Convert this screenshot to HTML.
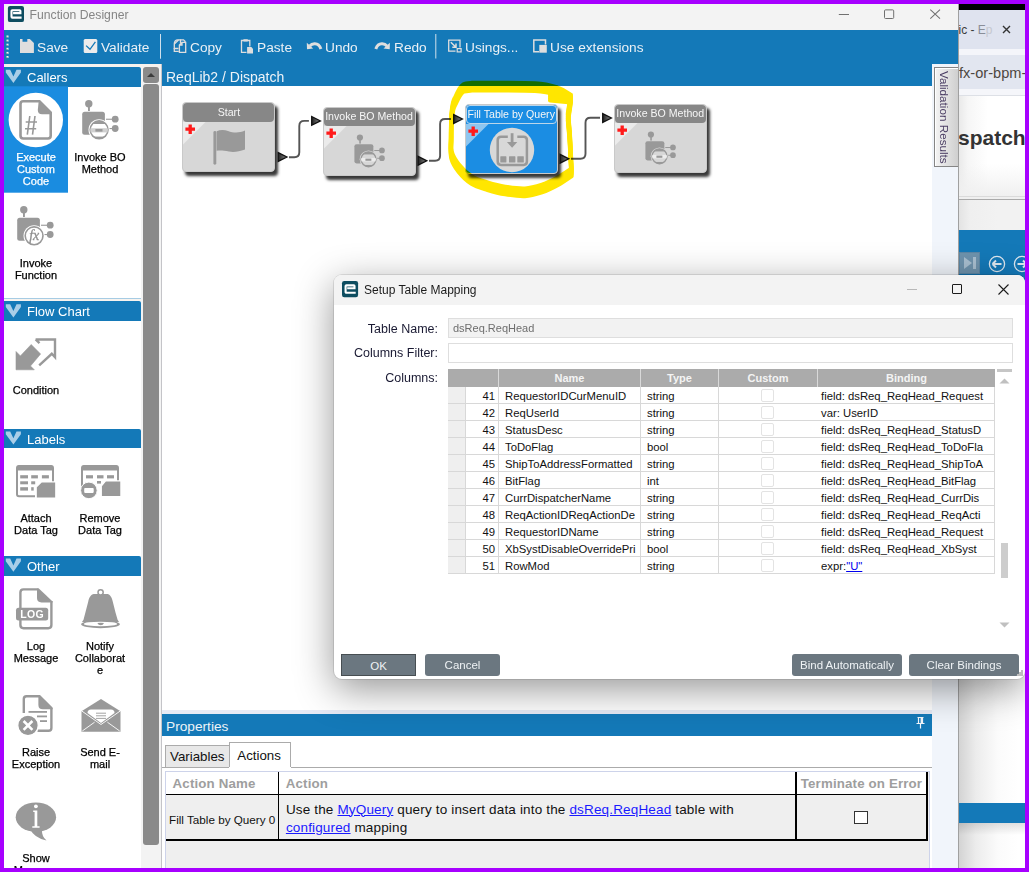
<!DOCTYPE html>
<html><head><meta charset="utf-8">
<style>
*{margin:0;padding:0;box-sizing:border-box}
html,body{width:1029px;height:872px;overflow:hidden;background:#a700ff;font-family:"Liberation Sans",sans-serif;position:relative}
.a{position:absolute}
.t{position:absolute;white-space:nowrap}
svg{position:absolute;overflow:visible}
.tbt{color:#eaf0f5;font-size:13.7px;top:40.2px;line-height:16px}
.sech{position:absolute;left:4px;width:137px;background:#1479b8;color:#fff;font-size:13px}
.sech .tx{position:absolute;left:23px;top:3px;line-height:15px}
.lbl{position:absolute;font-size:11px;color:#000;text-align:center;line-height:12.1px;width:64px;-webkit-text-stroke:0.25px currentColor}
.dl{font-size:12.5px;line-height:17px;color:#1a1a33;text-align:right}
.gh{top:2px;font-size:11px;line-height:14px;font-weight:bold;color:#f4f4f4;text-align:center}
.gr{position:absolute;left:0;width:547px;height:17px;border-bottom:1px solid #d8d8d8;background:#fff}
.gr .rh{position:absolute;left:0;top:0;width:18px;height:16px;background:#efefef;border-right:1px solid #d8d8d8}
.gr .c{position:absolute;top:0;height:16px;font-size:11.3px;line-height:18px;color:#111;white-space:nowrap;overflow:hidden;border-right:1px solid #d8d8d8}
.gr .num{left:18px;width:33px;text-align:right;padding-right:3px}
.gr .nm{left:51px;width:142px;padding-left:6px}
.gr .ty{left:193px;width:78px;padding-left:6px}
.gr .cb{position:absolute;left:313px;top:2px;width:13px;height:13px;border:1px solid #e3e3e3;border-radius:2px}
.gr .bd{left:270px;width:277px;padding-left:102px;border-left:none}
.gr .bd{left:370px;width:177px;padding-left:3px}
.btn{background:#6b7780;border-radius:3px;color:#eef2f4;font-size:11.5px;line-height:22px;text-align:center}
.node{border-radius:4px;box-shadow:3px 4px 3px rgba(0,0,0,0.78)}
.ntt{top:2.5px;font-size:10.6px;line-height:13px;color:#f6f6f6;text-align:center}
</style></head><body>
<!-- main window -->
<div class="a" style="left:4px;top:4px;width:954px;height:864px;background:#fff"></div>
<!-- title bar -->
<div class="a" style="left:4px;top:4px;width:954px;height:26px;background:#f3f3f3"></div>
<div class="t" style="left:29.6px;top:8px;font-size:12.2px;line-height:14px;color:#858585">Function Designer</div>
<!-- toolbar -->
<div class="a" style="left:4px;top:30px;width:954px;height:34px;background:#1479b8"></div>
<div class="t tbt" style="left:37px">Save</div>
<div class="t tbt" style="left:101px">Validate</div>
<div class="t tbt" style="left:190px">Copy</div>
<div class="t tbt" style="left:257px">Paste</div>
<div class="t tbt" style="left:325px">Undo</div>
<div class="t tbt" style="left:394px">Redo</div>
<div class="t tbt" style="left:465px">Usings...</div>
<div class="t tbt" style="left:550px">Use extensions</div>

<!-- title/toolbar icons -->
<svg style="left:0;top:0" width="958" height="64">
<rect x="7.9" y="5.9" width="16.1" height="16.2" rx="2.2" fill="#0e4d60"/>
<path d="M21.6 17.6H12.3Q11.5 17.6 11.5 16.8V11Q11.5 10.3 12.3 10.3H19.7Q20.4 10.3 20.4 11V13.1H13.1" fill="none" stroke="#fff" stroke-width="2.1"/>
<rect x="838.8" y="14" width="10.2" height="1" fill="#707070"/>
<rect x="884.5" y="9.9" width="9.2" height="8.6" rx="1" fill="none" stroke="#707070" stroke-width="1"/>
<path d="M930.3 9.6L940 18.6M940 9.6L930.3 18.6" stroke="#707070" stroke-width="1.05"/>
<g fill="#f4f4f4"><rect x="6.5" y="35.5" width="2" height="2"/><rect x="6.5" y="39.6" width="2" height="2"/><rect x="6.5" y="43.7" width="2" height="2"/><rect x="6.5" y="47.8" width="2" height="2"/><rect x="6.5" y="51.9" width="2" height="2"/><rect x="6.5" y="56" width="2" height="2"/></g>
<g fill="#6a6a6a"><rect x="6.5" y="36.7" width="1" height="1"/><rect x="6.5" y="40.8" width="1" height="1"/><rect x="6.5" y="44.9" width="1" height="1"/><rect x="6.5" y="49" width="1" height="1"/><rect x="6.5" y="53.1" width="1" height="1"/><rect x="6.5" y="57.2" width="1" height="1"/></g>
<path d="M20 39H22.5V41.7H27.3V39H29.8L33.9 43V52.9H20Z" fill="#dedede"/>
<rect x="83.7" y="39" width="13.6" height="13.9" rx="1.5" fill="#ececec"/>
<path d="M86.1 45.6L90 49.3L95.4 41.9" fill="none" stroke="#1479b8" stroke-width="1.3"/>
<rect x="160" y="34" width="1" height="24.7" fill="#cfe0ec"/>
<path d="M180.5 43.5V40.3Q180.5 39.8 181 39.8H183.5L185 41.3V43" fill="none" stroke="#dedede" stroke-width="1.3"/>
<path d="M178.5 48.5L174.3 48.5V44Q174.3 39.8 178 39.8H181" fill="none" stroke="#dedede" stroke-width="1.3"/>
<path d="M174.3 44L178.5 40" fill="none" stroke="#dedede" stroke-width="1.3"/>
<path d="M182 42.3H185.7V52.3H179.4V45L182 42.3ZM179.4 45H182V42.3" fill="none" stroke="#dedede" stroke-width="1.3"/>
<path d="M178.8 51.4H174.3V48" fill="none" stroke="#dedede" stroke-width="1.3"/>
<path d="M246.5 52.3H241.5V40.5H249.8V46.5" fill="none" stroke="#dedede" stroke-width="1.3"/>
<rect x="243.2" y="39.3" width="4.8" height="2.2" rx="0.8" fill="#dedede"/>
<path d="M247.1 47H251.3L253 48.7V53.6H247.1Z" fill="#dedede"/>
<path d="M320.9 49Q319 43.5 314.5 43.8Q311.5 44 309.8 46" fill="none" stroke="#dedede" stroke-width="3"/>
<path d="M306.8 42.7L307 49.2L313.2 48.6Z" fill="#dedede"/>
<path d="M375.8 49Q377.7 43.5 382.2 43.8Q385.2 44 386.9 46" fill="none" stroke="#dedede" stroke-width="3"/>
<path d="M389.9 42.7L389.7 49.2L383.5 48.6Z" fill="#dedede"/>
<rect x="435.3" y="34" width="1" height="24.5" fill="#cfe0ec"/>
<path d="M455.5 51.2H448.7V40.1H460V47.5" fill="none" stroke="#dedede" stroke-width="1.3"/>
<path d="M450.8 42.2L456 47.2M456 43.5V47.2H452.3" fill="none" stroke="#dedede" stroke-width="1.5"/>
<rect x="457.2" y="48.6" width="3.9" height="3.3" fill="none" stroke="#dedede" stroke-width="1.2"/>
<path d="M539 51.8H533.8V40.1H545.5V44.6" fill="none" stroke="#dedede" stroke-width="1.5"/>
<rect x="539.3" y="44.9" width="7.5" height="7.8" fill="#dedede"/>
</svg>
<!-- left panel -->
<div class="a" style="left:4px;top:64px;width:158px;height:3px;background:#f6f2ee"></div>
<div class="sech" style="top:67px;height:19.5px;border-top-right-radius:2px"><span class="tx">Callers</span></div>
<div class="sech" style="top:301.2px;height:19.4px;border-top-right-radius:2px"><span class="tx">Flow Chart</span></div>
<div class="sech" style="top:428.5px;height:19.6px;border-top-right-radius:2px"><span class="tx">Labels</span></div>
<div class="sech" style="top:555.6px;height:20.2px;border-top-right-radius:2px"><span class="tx">Other</span></div>
<!-- scrollbar -->
<div class="a" style="left:141px;top:67px;width:20px;height:801px;background:#f3f3f3"></div>
<div class="a" style="left:143px;top:84.3px;width:16px;height:761px;background:#8a8a8a;border-radius:3px"></div>
<div class="a" style="left:143px;top:67px;width:16px;height:15.7px;background:#8a8a8a;border-radius:3px"></div>
<svg style="left:147px;top:73px" width="8" height="4"><path d="M0 4L4 0L8 4Z" fill="#3c3c3c"/></svg>
<div class="a" style="left:161px;top:64px;width:1px;height:804px;background:#c4c4c8"></div>
<div class="a" style="left:4px;top:298px;width:137px;height:1px;background:#a6cce4"></div>
<div class="a" style="left:4px;top:299px;width:137px;height:2px;background:#f7f3ef"></div>

<!-- left panel icons -->
<svg style="left:0;top:0" width="162" height="872">
<polygon fill="#a9cee8" points="5.8,69.8 10.2,69.8 13.4,76.6 16.5,69.8 20.9,69.8 20.9,72.5 13.4,82.9 5.8,72.5"/><polygon fill="#a9cee8" points="5.8,304.3 10.2,304.3 13.4,311.1 16.5,304.3 20.9,304.3 20.9,307.0 13.4,317.4 5.8,307.0"/><polygon fill="#a9cee8" points="5.8,431.5 10.2,431.5 13.4,438.3 16.5,431.5 20.9,431.5 20.9,434.2 13.4,444.6 5.8,434.2"/><polygon fill="#a9cee8" points="5.8,558.6 10.2,558.6 13.4,565.4 16.5,558.6 20.9,558.6 20.9,561.3 13.4,571.7 5.8,561.3"/>
<rect x="4" y="86.3" width="64" height="106.4" fill="#1a8ce0"/>
<circle cx="35.8" cy="120" r="27.2" fill="#fff"/>
<path d="M39.5 101.3H23.2Q20.5 101.3 20.5 104V135.8Q20.5 138.5 23.2 138.5H48Q50.7 138.5 50.7 135.8V112.4" fill="none" stroke="#999" stroke-width="2.6"/>
<path d="M38.8 100H40L52 112V114.2H42Q37.8 114.2 37.8 110Z" fill="#999"/>
<path d="M29.8 116L27.3 134.7M35 116L32.5 134.7M25.7 122H37M25 128.7H36.2" stroke="#999" stroke-width="1.6" fill="none"/>
<g transform="translate(0,0)">
<circle cx="88.8" cy="103.7" r="3.7" fill="#999"/><rect x="88" y="103" width="1.9" height="8" fill="#999"/>
<rect x="82.2" y="111.8" width="22.7" height="23" rx="2.5" fill="#999"/>
<circle cx="115.2" cy="119.2" r="3.4" fill="#999"/><circle cx="115.2" cy="128.5" r="3.4" fill="#999"/>
<rect x="106" y="118.7" width="7" height="1.1" fill="#999"/><rect x="108" y="128" width="5" height="1.1" fill="#999"/>
<circle cx="99.1" cy="129.8" r="10.6" fill="#fff"/>
<circle cx="99.1" cy="129.8" r="8.9" fill="#fff" stroke="#999" stroke-width="1.6"/>
<clipPath id="cc1"><circle cx="99.1" cy="129.8" r="8.9"/></clipPath>
<g clip-path="url(#cc1)"><rect x="89" y="119" width="21" height="5" fill="#999"/><rect x="89" y="128.2" width="21" height="4.2" fill="#d0d0d0"/><rect x="95.4" y="129" width="7.1" height="2.6" fill="#999"/><rect x="89" y="136.6" width="21" height="4" fill="#999"/></g>
</g>
<g transform="translate(-65,106)">
<circle cx="88.8" cy="103.7" r="3.7" fill="#999"/><rect x="88" y="103" width="1.9" height="8" fill="#999"/>
<rect x="82.2" y="111.8" width="22.7" height="23" rx="2.5" fill="#999"/>
<circle cx="115.2" cy="119.2" r="3.4" fill="#999"/><circle cx="115.2" cy="128.5" r="3.4" fill="#999"/>
<rect x="106" y="118.7" width="7" height="1.1" fill="#999"/><rect x="108" y="128" width="5" height="1.1" fill="#999"/>
<circle cx="99.1" cy="129.8" r="10.6" fill="#fff"/>
<circle cx="99.1" cy="129.8" r="8.9" fill="#fff" stroke="#999" stroke-width="1.6"/>
<text x="99.3" y="134.3" font-family="Liberation Serif" font-style="italic" font-size="14" fill="#8f8f8f" stroke="#8f8f8f" stroke-width="0.3" text-anchor="middle">fx</text>
</g>
<!-- condition -->
<path d="M16 351.5V369.8H34.3L30.5 366L40.6 354L31.2 344.5L20.4 355.9Z" fill="#999" stroke="#999" stroke-width="0.6" stroke-linejoin="round"/>
<path d="M35.6 339.5H55V357.2L51.8 353.8L39.2 365.4M35.6 339.5L39.5 343.2" fill="none" stroke="#999" stroke-width="2.4"/>
<!-- attach data tag -->
<path d="M35 496.2H19Q17 496.2 17 494.2V468Q17 466 19 466H51Q53 466 53 468V482" fill="none" stroke="#999" stroke-width="2"/>
<rect x="17" y="465.5" width="36" height="5" rx="1.5" fill="#999"/>
<g fill="#999"><rect x="20.2" y="475.2" width="7.8" height="3.2"/><rect x="31.2" y="475.2" width="6.7" height="3.2"/><rect x="41.9" y="475.2" width="7" height="3.2"/>
<rect x="20.2" y="481.3" width="7.8" height="3"/><rect x="31.2" y="481.3" width="4" height="3"/>
<rect x="20.2" y="487.2" width="7.8" height="3.4"/><rect x="31.2" y="487.2" width="2.5" height="3.4"/></g>
<path d="M36.2 487.2L41.5 481.9H55.8V498H36.2Z" fill="#999" stroke="#fff" stroke-width="1.2"/>
<!-- remove data tag -->
<path d="M82 488V468Q82 466 84 466H116Q118 466 118 468V481" fill="none" stroke="#999" stroke-width="2"/>
<rect x="82" y="465.5" width="36" height="5" rx="1.5" fill="#999"/>
<g fill="#999"><rect x="86" y="475.2" width="7" height="3.2"/><rect x="97" y="475.2" width="6.5" height="3.2"/><rect x="107" y="475.2" width="7" height="3.2"/><rect x="97" y="481" width="4" height="2.6"/></g>
<path d="M101.3 486L105.6 480.9H120.9V496.7H101.3Z" fill="#999" stroke="#fff" stroke-width="1.2"/>
<circle cx="88.9" cy="490.4" r="8.3" fill="#999" stroke="#fff" stroke-width="1"/>
<rect x="84.2" y="488.1" width="9.5" height="4.8" rx="0.8" fill="#fff"/>
</svg>
<div class="lbl" style="left:4px;top:151px;color:#fff">Execute<br>Custom<br>Code</div>
<div class="lbl" style="left:68px;top:151px">Invoke BO<br>Method</div>
<div class="lbl" style="left:4px;top:257px">Invoke<br>Function</div>
<div class="lbl" style="left:4px;top:384px">Condition</div>
<div class="lbl" style="left:4px;top:512px">Attach<br>Data Tag</div>
<div class="lbl" style="left:68px;top:512px">Remove<br>Data Tag</div>
<div class="lbl" style="left:4px;top:640px">Log<br>Message</div>
<div class="lbl" style="left:68px;top:640px">Notify<br>Collaborat<br>e</div>
<div class="lbl" style="left:4px;top:746px">Raise<br>Exception</div>
<div class="lbl" style="left:68px;top:746px">Send E-<br>mail</div>
<div class="lbl" style="left:4px;top:852px">Show<br>Message</div>
<!-- canvas -->
<div class="a" style="left:162px;top:64px;width:770px;height:22px;background:#1479b8"></div>
<div class="t" style="left:166px;top:68.5px;font-size:14px;line-height:16px;color:#eef3f7">ReqLib2 / Dispatch</div>

<!-- canvas nodes -->
<div class="a node" style="left:182.4px;top:102.4px;width:93px;height:69.3px;background:#d7d7d7;border:1px solid #c9c9c9">
  <svg style="left:0;top:18.2px" width="23" height="23"><path d="M0 0H22.5L0 22.5Z" fill="#ebebeb"/></svg>
  <div class="a" style="left:0;top:0;width:91px;height:18.2px;background:#878787;border-radius:4px;"></div>
  <div class="t ntt" style="left:0;width:91px">Start</div>
  <svg style="left:2px;top:20.2px" width="11" height="11"><path d="M3.55 0.4H6.85V3.55H10V6.85H6.85V10H3.55V6.85H0.4V3.55H3.55Z" fill="#ff1a1a"/></svg>
  <svg style="left:29px;top:26.5px" width="36" height="36"><rect x="1.4" y="1.1" width="2.9" height="33.6" rx="1.45" fill="#999"/><path d="M4.6 1.2C8 -0.3 12 -0.4 16 0.9C21 2.6 26 3.6 33 0.6V19.5C27 21.6 22 22.6 17 21.6C12 20.6 8 20.4 4.6 20.8Z" fill="#999"/></svg>
</div>
<div class="a node" style="left:322.5px;top:106.6px;width:93px;height:69.3px;background:#d7d7d7;border:1px solid #c9c9c9">
  <svg style="left:0;top:18.2px" width="23" height="23"><path d="M0 0H22.5L0 22.5Z" fill="#ebebeb"/></svg>
  <div class="a" style="left:0;top:0;width:91px;height:18.2px;background:#878787;border-radius:4px;"></div>
  <div class="t ntt" style="left:0;width:91px">Invoke BO Method</div>
  <svg style="left:2px;top:20.2px" width="11" height="11"><path d="M3.55 0.4H6.85V3.55H10V6.85H6.85V10H3.55V6.85H0.4V3.55H3.55Z" fill="#ff1a1a"/></svg>
  <svg style="left:0;top:0" width="93" height="69"><g transform="translate(30.4,26.4) scale(0.835) translate(-82.2,-100)">
<circle cx="88.8" cy="103.7" r="3.7" fill="#999"/><rect x="88" y="103" width="1.9" height="8" fill="#999"/>
<rect x="82.2" y="111.8" width="22.7" height="23" rx="2.5" fill="#999"/>
<circle cx="115.2" cy="119.2" r="3.4" fill="#999"/><circle cx="115.2" cy="128.5" r="3.4" fill="#999"/>
<rect x="106" y="118.7" width="7" height="1.2" fill="#999"/><rect x="108" y="128" width="5" height="1.2" fill="#999"/>
<circle cx="99.1" cy="129.8" r="10.6" fill="#d7d7d7"/>
<circle cx="99.1" cy="129.8" r="8.9" fill="#d7d7d7" stroke="#999" stroke-width="1.7"/>
<clipPath id="ccn1"><circle cx="99.1" cy="129.8" r="8.9"/></clipPath>
<g clip-path="url(#ccn1)"><rect x="89" y="119" width="21" height="5" fill="#999"/><rect x="89" y="128.2" width="21" height="4.2" fill="#ececec"/><rect x="95.4" y="129" width="7.1" height="2.6" fill="#999"/><rect x="89" y="136.6" width="21" height="4" fill="#999"/></g>
</g></svg>
</div>
<div class="a node" style="left:464.7px;top:104.4px;width:93px;height:69.3px;background:#1b8de3;border:1px solid #c9c9c9">
  <svg style="left:0;top:18.2px" width="23" height="23"><path d="M0 0H22.5L0 22.5Z" fill="#8ec6f0"/></svg>
  <div class="a" style="left:0;top:0;width:91px;height:18.2px;background:#1b8de3;border-radius:4px;border:1px solid #bcd6ea;"></div>
  <div class="t ntt" style="left:0;width:91px">Fill Table by Query</div>
  <svg style="left:2px;top:20.2px" width="11" height="11"><path d="M3.55 0.4H6.85V3.55H10V6.85H6.85V10H3.55V6.85H0.4V3.55H3.55Z" fill="#ff1a1a"/></svg>
  <svg style="left:23px;top:21.2px" width="46" height="46" viewBox="488 126 46 46"><circle cx="511" cy="149" r="22.2" fill="#d8d8d8"/>
<path d="M506.8 135.7H500Q496.7 135.7 496.7 139V160.6Q496.7 163.9 500 163.9H522.6Q525.9 163.9 525.9 160.6V139Q525.9 135.7 522.6 135.7H516.3" fill="none" stroke="#999" stroke-width="2.5"/>
<rect x="509.7" y="132.2" width="2.8" height="10" fill="#999"/><path d="M505.9 141.1H516.3L511.1 146.8Z" fill="#999"/>
<rect x="499.3" y="155.3" width="6.1" height="6.1" rx="0.5" fill="#999"/><rect x="508" y="155.3" width="6.4" height="6.1" rx="0.5" fill="#999"/><rect x="516.3" y="155.3" width="6.5" height="6.1" rx="0.5" fill="#999"/></svg>
</div>
<div class="a node" style="left:613.7px;top:103.7px;width:93px;height:69.3px;background:#d7d7d7;border:1px solid #c9c9c9">
  <svg style="left:0;top:18.2px" width="23" height="23"><path d="M0 0H22.5L0 22.5Z" fill="#ebebeb"/></svg>
  <div class="a" style="left:0;top:0;width:91px;height:18.2px;background:#878787;border-radius:4px;"></div>
  <div class="t ntt" style="left:0;width:91px">Invoke BO Method</div>
  <svg style="left:2px;top:20.2px" width="11" height="11"><path d="M3.55 0.4H6.85V3.55H10V6.85H6.85V10H3.55V6.85H0.4V3.55H3.55Z" fill="#ff1a1a"/></svg>
  <svg style="left:0;top:0" width="93" height="69"><g transform="translate(30.4,26.4) scale(0.835) translate(-82.2,-100)">
<circle cx="88.8" cy="103.7" r="3.7" fill="#999"/><rect x="88" y="103" width="1.9" height="8" fill="#999"/>
<rect x="82.2" y="111.8" width="22.7" height="23" rx="2.5" fill="#999"/>
<circle cx="115.2" cy="119.2" r="3.4" fill="#999"/><circle cx="115.2" cy="128.5" r="3.4" fill="#999"/>
<rect x="106" y="118.7" width="7" height="1.2" fill="#999"/><rect x="108" y="128" width="5" height="1.2" fill="#999"/>
<circle cx="99.1" cy="129.8" r="10.6" fill="#d7d7d7"/>
<circle cx="99.1" cy="129.8" r="8.9" fill="#d7d7d7" stroke="#999" stroke-width="1.7"/>
<clipPath id="ccn2"><circle cx="99.1" cy="129.8" r="8.9"/></clipPath>
<g clip-path="url(#ccn2)"><rect x="89" y="119" width="21" height="5" fill="#999"/><rect x="89" y="128.2" width="21" height="4.2" fill="#ececec"/><rect x="95.4" y="129" width="7.1" height="2.6" fill="#999"/><rect x="89" y="136.6" width="21" height="4" fill="#999"/></g>
</g></svg>
</div>
<svg style="left:0;top:0" width="1029" height="872">
<defs><linearGradient id="tg" x1="0" x2="1" y1="0" y2="0"><stop offset="0" stop-color="#222"/><stop offset="1" stop-color="#8a8a8a"/></linearGradient></defs>
<path d="M278.2 152.6L286.9 157L278.2 161.4Z" fill="url(#tg)" stroke="#111" stroke-width="1.3" stroke-linejoin="miter"/><path d="M289 157.2H294.3Q299.3 157.2 299.3 152.2V125.9Q299.3 120.9 304.3 120.9H308.9" fill="none" stroke="#555" stroke-width="1.9"/><path d="M311.7 116.5L320.4 120.9L311.7 125.30000000000001Z" fill="url(#tg)" stroke="#111" stroke-width="1.3" stroke-linejoin="miter"/>
<path d="M418.09999999999997 156.4L426.79999999999995 160.8L418.09999999999997 165.20000000000002Z" fill="url(#tg)" stroke="#111" stroke-width="1.3" stroke-linejoin="miter"/><path d="M429 160.8H435.1Q440.1 160.8 440.1 155.8V124Q440.1 119 445.1 119H450.9" fill="none" stroke="#555" stroke-width="1.9"/><path d="M453.7 114.6L462.4 119L453.7 123.4Z" fill="url(#tg)" stroke="#111" stroke-width="1.3" stroke-linejoin="miter"/>
<path d="M560.1 154.4L568.8 158.8L560.1 163.20000000000002Z" fill="url(#tg)" stroke="#111" stroke-width="1.3" stroke-linejoin="miter"/><path d="M571 158.8H580.5Q585.5 158.8 585.5 153.8V122.8Q585.5 117.8 590.5 117.8H600" fill="none" stroke="#555" stroke-width="1.9"/><path d="M602.7 113.6L611.4 118L602.7 122.4Z" fill="url(#tg)" stroke="#111" stroke-width="1.3" stroke-linejoin="miter"/>
</svg>
<!-- highlight -->
<svg style="left:0;top:0;mix-blend-mode:multiply" width="1029" height="872">
<g fill="none" stroke="#ffe600" stroke-width="4.4" stroke-linejoin="round" stroke-linecap="round">
<path transform="translate(0,-3.65)" d="M550.2 96.6 L570.8 98.6 L568 117 L569.7 136 L571.5 172.5 L571.5 172.5C569.2 173.9 562.9 178.5 558 181.2C553.1 183.9 547.5 186.7 542 188.5C536.5 190.3 531.1 192.0 525 192.3C518.9 192.6 511.4 191.5 505.2 190.5C498.9 189.5 493.1 187.9 487.5 186.2C481.9 184.4 476.3 183.0 471.5 180C466.7 177.0 461.9 172.2 458.6 168C455.3 163.8 452.8 159.7 451.5 155C450.2 150.3 451.1 146.2 451.1 140C451.1 133.8 451.1 123.7 451.5 118C451.9 112.3 452.5 108.8 453.2 105.9C453.9 103.0 454.5 102.6 455.5 100.5C456.5 98.4 457.7 95.6 459 93.5C460.3 91.4 461.3 89.1 463.5 88C465.7 86.9 469.6 86.9 472 86.7C474.4 86.5 467.5 86.6 478 86.65C488.5 86.7 521.7 86.4 535 87.15C548.3 88.0 551.8 89.6 557.7 91.45C563.6 93.3 568.2 97.2 570.3 98.35"/><path transform="translate(0,-1.83)" d="M550.2 96.6 L570.8 98.6 L568 117 L569.7 136 L571.5 172.5 L571.5 172.5C569.2 173.9 562.9 178.5 558 181.2C553.1 183.9 547.5 186.7 542 188.5C536.5 190.3 531.1 192.0 525 192.3C518.9 192.6 511.4 191.5 505.2 190.5C498.9 189.5 493.1 187.9 487.5 186.2C481.9 184.4 476.3 183.0 471.5 180C466.7 177.0 461.9 172.2 458.6 168C455.3 163.8 452.8 159.7 451.5 155C450.2 150.3 451.1 146.2 451.1 140C451.1 133.8 451.1 123.7 451.5 118C451.9 112.3 452.5 108.8 453.2 105.9C453.9 103.0 454.5 102.6 455.5 100.5C456.5 98.4 457.7 95.6 459 93.5C460.3 91.4 461.3 89.1 463.5 88C465.7 86.9 469.6 86.9 472 86.7C474.4 86.5 467.5 86.6 478 86.65C488.5 86.7 521.7 86.4 535 87.15C548.3 88.0 551.8 89.6 557.7 91.45C563.6 93.3 568.2 97.2 570.3 98.35"/><path transform="translate(0,0)" d="M550.2 96.6 L570.8 98.6 L568 117 L569.7 136 L571.5 172.5 L571.5 172.5C569.2 173.9 562.9 178.5 558 181.2C553.1 183.9 547.5 186.7 542 188.5C536.5 190.3 531.1 192.0 525 192.3C518.9 192.6 511.4 191.5 505.2 190.5C498.9 189.5 493.1 187.9 487.5 186.2C481.9 184.4 476.3 183.0 471.5 180C466.7 177.0 461.9 172.2 458.6 168C455.3 163.8 452.8 159.7 451.5 155C450.2 150.3 451.1 146.2 451.1 140C451.1 133.8 451.1 123.7 451.5 118C451.9 112.3 452.5 108.8 453.2 105.9C453.9 103.0 454.5 102.6 455.5 100.5C456.5 98.4 457.7 95.6 459 93.5C460.3 91.4 461.3 89.1 463.5 88C465.7 86.9 469.6 86.9 472 86.7C474.4 86.5 467.5 86.6 478 86.65C488.5 86.7 521.7 86.4 535 87.15C548.3 88.0 551.8 89.6 557.7 91.45C563.6 93.3 568.2 97.2 570.3 98.35"/><path transform="translate(0,1.83)" d="M550.2 96.6 L570.8 98.6 L568 117 L569.7 136 L571.5 172.5 L571.5 172.5C569.2 173.9 562.9 178.5 558 181.2C553.1 183.9 547.5 186.7 542 188.5C536.5 190.3 531.1 192.0 525 192.3C518.9 192.6 511.4 191.5 505.2 190.5C498.9 189.5 493.1 187.9 487.5 186.2C481.9 184.4 476.3 183.0 471.5 180C466.7 177.0 461.9 172.2 458.6 168C455.3 163.8 452.8 159.7 451.5 155C450.2 150.3 451.1 146.2 451.1 140C451.1 133.8 451.1 123.7 451.5 118C451.9 112.3 452.5 108.8 453.2 105.9C453.9 103.0 454.5 102.6 455.5 100.5C456.5 98.4 457.7 95.6 459 93.5C460.3 91.4 461.3 89.1 463.5 88C465.7 86.9 469.6 86.9 472 86.7C474.4 86.5 467.5 86.6 478 86.65C488.5 86.7 521.7 86.4 535 87.15C548.3 88.0 551.8 89.6 557.7 91.45C563.6 93.3 568.2 97.2 570.3 98.35"/><path transform="translate(0,3.65)" d="M550.2 96.6 L570.8 98.6 L568 117 L569.7 136 L571.5 172.5 L571.5 172.5C569.2 173.9 562.9 178.5 558 181.2C553.1 183.9 547.5 186.7 542 188.5C536.5 190.3 531.1 192.0 525 192.3C518.9 192.6 511.4 191.5 505.2 190.5C498.9 189.5 493.1 187.9 487.5 186.2C481.9 184.4 476.3 183.0 471.5 180C466.7 177.0 461.9 172.2 458.6 168C455.3 163.8 452.8 159.7 451.5 155C450.2 150.3 451.1 146.2 451.1 140C451.1 133.8 451.1 123.7 451.5 118C451.9 112.3 452.5 108.8 453.2 105.9C453.9 103.0 454.5 102.6 455.5 100.5C456.5 98.4 457.7 95.6 459 93.5C460.3 91.4 461.3 89.1 463.5 88C465.7 86.9 469.6 86.9 472 86.7C474.4 86.5 467.5 86.6 478 86.65C488.5 86.7 521.7 86.4 535 87.15C548.3 88.0 551.8 89.6 557.7 91.45C563.6 93.3 568.2 97.2 570.3 98.35"/>
</g></svg>
<!-- validation strip -->
<div class="a" style="left:932px;top:64px;width:26px;height:804px;background:#f1f5fb"></div>

<!-- properties -->
<div class="a" style="left:162px;top:710px;width:770px;height:3.8px;background:#e6eaf5"></div>
<div class="a" style="left:162px;top:713.8px;width:770px;height:22px;background:#1479b8"></div>
<div class="t" style="left:166px;top:719px;font-size:13.7px;line-height:15px;color:#eef3f7">Properties</div>
<svg style="left:916px;top:717px" width="9" height="12"><path d="M1.5 0.5H7.5M2.5 0.5V6.5H6.5V0.5M0.5 6.5H8.5M4.5 6.5V11.5" stroke="#f2f6fa" stroke-width="1.2" fill="none"/><rect x="4.6" y="1" width="1.8" height="5.5" fill="#f2f6fa"/></svg>
<div class="a" style="left:162px;top:735.8px;width:770px;height:132.2px;background:#fff"></div>
<div class="a" style="left:164.6px;top:744.5px;width:65px;height:23px;background:#e8e8e8;border:1px solid #ababab;border-bottom:none"></div>
<div class="t" style="left:170px;top:748.5px;font-size:13.3px;line-height:15px;color:#111">Variables</div>
<div class="a" style="left:229.4px;top:742.3px;width:61.3px;height:26px;background:#fff;border:1px solid #ababab;border-bottom:none"></div>
<div class="t" style="left:237.3px;top:748px;font-size:13.3px;line-height:15px;color:#111">Actions</div>
<div class="a" style="left:162px;top:767.3px;width:770px;height:1px;background:#ababab"></div>
<div class="a" style="left:290.7px;top:767.3px;width:641.3px;height:1px;background:#ababab"></div>
<div class="a" style="left:229.4px;top:767.3px;width:61.3px;height:1px;background:#fff"></div>
<div class="a" style="left:165.3px;top:770.7px;width:764.4px;height:97.3px;background:#efefef;border:1px solid #cdd3ea;border-bottom:none"></div>
<div class="a" style="left:166.3px;top:771.7px;width:761px;height:23.1px;background:#fff"></div>
<div class="t" style="left:172.6px;top:775.5px;font-size:13.3px;line-height:15px;font-weight:bold;letter-spacing:0.15px;color:#9e9e9e">Action Name</div>
<div class="t" style="left:285.8px;top:775.5px;font-size:13.3px;line-height:15px;font-weight:bold;letter-spacing:0.15px;color:#9e9e9e">Action</div>
<div class="t" style="left:796px;top:775.5px;width:131px;text-align:center;font-size:13.3px;line-height:15px;font-weight:bold;letter-spacing:0.15px;color:#9e9e9e">Terminate on Error</div>
<div class="a" style="left:166.3px;top:793.8px;width:761px;height:1.6px;background:#000"></div>
<div class="a" style="left:166.3px;top:839.2px;width:761px;height:1.6px;background:#000"></div>
<div class="a" style="left:277.6px;top:771.7px;width:1.5px;height:69px;background:#000"></div>
<div class="a" style="left:795px;top:771.7px;width:1.5px;height:69px;background:#000"></div>
<div class="a" style="left:926px;top:771.7px;width:1.5px;height:69px;background:#000"></div>
<div class="t" style="left:169px;top:811.5px;font-size:11.7px;line-height:15px;color:#111">Fill Table by Query 0</div>
<div class="t" style="left:285.9px;top:800.5px;font-size:13.5px;line-height:18.3px;letter-spacing:0.16px;color:#111">Use the <u style="color:#1a1aff">MyQuery</u> query to insert data into the <u style="color:#1a1aff">dsReq.ReqHead</u> table with<br><u style="color:#1a1aff">configured</u> mapping</div>
<div class="a" style="left:854.3px;top:810.7px;width:13.7px;height:13.7px;background:#fff;border:1px solid #333"></div>

<!-- other icons -->
<svg style="left:0;top:0" width="162" height="872">
<path d="M37.5 589.4H23.5Q20.4 589.4 20.4 592.5V625.1Q20.4 628.2 23.5 628.2H48.3Q51.4 628.2 51.4 625.1V601" fill="none" stroke="#999" stroke-width="2.4"/>
<path d="M37 588.2H38.6L52.6 601.6V602.4H41.5Q37 602.4 37 598Z" fill="#999"/>
<rect x="16" y="607.8" width="32.2" height="12.6" rx="2.5" fill="#999"/>
<text x="32.1" y="618.3" font-family="Liberation Sans" font-weight="bold" font-size="10.5" fill="#fff" text-anchor="middle" letter-spacing="0.3">LOG</text>
<path d="M93.8 593.9H107.5C110 594.5 112 597 112.8 601.8L115.5 612.4L117.6 619.8L119 622H82L83.5 619.8L85.4 612.4L88.2 601.8C89 597 91 594.5 93.8 593.9Z" fill="#999"/>
<circle cx="100.6" cy="592.3" r="2.6" fill="#fff" stroke="#999" stroke-width="1.5"/>
<ellipse cx="100.5" cy="624.3" rx="19.4" ry="3.9" fill="#999"/>
<ellipse cx="100.5" cy="623.9" rx="16.7" ry="2.25" fill="#fff"/>
<path d="M97.4 623Q100.7 622.4 104 623Q103 625.3 100.7 625.3Q98.4 625.3 97.4 623Z" fill="#999"/>
<path d="M39 696.3H26.5Q23.8 696.3 23.8 699V713M37.5 730.8H48.5Q51.4 730.8 51.4 727.9V708" fill="none" stroke="#999" stroke-width="2.4"/>
<path d="M38.4 695.1H40L52.6 707.6V709.3H42.8Q38.4 709.3 38.4 705Z" fill="#999"/>
<rect x="28.5" y="711" width="18.5" height="1.8" fill="#999"/>
<rect x="37" y="715.5" width="10" height="1.8" fill="#999"/>
<rect x="40" y="720.2" width="7" height="1.8" fill="#999"/>
<circle cx="28" cy="725.4" r="10.2" fill="#999" stroke="#fff" stroke-width="1.2"/>
<path d="M23.6 721L32.4 729.8M32.4 721L23.6 729.8" stroke="#fff" stroke-width="2.6"/>
<path d="M81.5 711.3L101 698.9L120.5 711.3V731.7H81.5Z" fill="#999"/>
<path d="M87.5 713Q87.5 709.5 91 709.5H111Q114.5 709.5 114.5 713L101 723Z" fill="#fff"/>
<path d="M96 713.2H106M96 715.8H106M96 718.4H106" stroke="#999" stroke-width="0.9"/>
<path d="M81.5 710.8L101 724.5L120.5 710.8" fill="none" stroke="#fff" stroke-width="0.9"/>
<path d="M82.3 731L94.6 722.2M119.7 731L107.4 722.2" stroke="#fff" stroke-width="0.9"/>
<ellipse cx="35.9" cy="817.2" rx="20.2" ry="14.8" fill="#999"/>
<path d="M29.5 828Q34 838 46.5 840.5Q41.5 836.5 42 829Z" fill="#999"/>
<circle cx="35.9" cy="806.3" r="1.9" fill="#fff"/>
<path d="M33.2 810.5H37.3V826.2H39.6V827.7H32.3V826.2H34.6V812H33.2Z" fill="#fff"/>
</svg>
<!-- validation results tab -->
<div class="a" style="left:934px;top:67.2px;width:24px;height:100.3px;background:linear-gradient(90deg,#f4f4f4,#cfcfcf);border:1px solid #858585;border-right:none;box-shadow:inset 1px 1px 0 #fff"></div>
<div class="t" style="left:951px;top:70.9px;transform-origin:0 0;transform:rotate(90deg);font-size:11.7px;line-height:14px;color:#4a3d63">Validation Results</div>
<!-- background window -->
<div class="a" style="left:958px;top:4px;width:67px;height:864px;background:#fff;overflow:hidden">
  <div class="a" style="left:0;top:0;width:67px;height:6px;background:#000"></div>
  <div class="a" style="left:0;top:6px;width:67px;height:39px;background:#dfe3ef"></div>
  <div class="t" style="left:0.5px;top:19px;font-size:12px;line-height:14px;color:#3c3c3c">ic - <span style="color:#8a8e98">E</span><span style="color:#c5c8d0">p</span></div>
  <svg style="left:44px;top:21px" width="9" height="9"><path d="M1 1L8 8M8 1L1 8" stroke="#333" stroke-width="1.4"/></svg>
  <div class="a" style="left:0;top:45px;width:67px;height:6px;background:#f4f5fa"></div>
  <div class="a" style="left:0;top:51px;width:67px;height:34px;background:#e2e6f0"></div>
  <div class="t" style="left:1px;top:60.5px;font-size:14.6px;line-height:16px;color:#4d4641">fx-or-bpm-</div>
  <div class="a" style="left:0;top:85px;width:67px;height:6px;background:#f5f6fa"></div>
  <div class="a" style="left:0;top:91px;width:67px;height:1px;background:#dde0e6"></div>
  <div class="a" style="left:0;top:92px;width:67px;height:100px;background:linear-gradient(90deg,#e8e8e8 0px,#f6f6f6 10px,#fff 30px)"></div>
  <div class="t" style="left:0px;top:122px;font-size:21px;line-height:24px;font-weight:bold;color:#333">spatch</div>
  <div class="a" style="left:0;top:160px;width:67px;height:32px;background:linear-gradient(180deg,rgba(240,240,240,0),rgba(240,240,240,1))"></div>
  <div class="a" style="left:0;top:192.2px;width:67px;height:1px;background:#dadada"></div>
  <div class="a" style="left:0;top:193.2px;width:67px;height:1.6px;background:#efefef"></div>
  <div class="a" style="left:0;top:194.8px;width:67px;height:1px;background:#a9a9a9"></div>
  <div class="a" style="left:0;top:195.8px;width:67px;height:30px;background:linear-gradient(90deg,#e2e2e2 0px,#efefef 12px,#f2f2f2 40px)"></div>
  <div class="a" style="left:0;top:226px;width:67px;height:60px;background:#1479b8"></div>
  <div class="a" style="left:1px;top:248px;width:21px;height:22px;background:#6f93ad;border:1px solid #5d87a5"></div>
  <svg style="left:5px;top:252px" width="14" height="14"><path d="M1 1L9 7L1 13Z" fill="#a9bfd0"/><rect x="10" y="1" width="3" height="12" fill="#a9bfd0"/></svg>
  <svg style="left:30px;top:251px" width="18" height="18"><circle cx="9" cy="9" r="7.6" fill="none" stroke="#dfe8f0" stroke-width="1.3"/><path d="M4.5 9H13.5M4.5 9L8 5.5M4.5 9L8 12.5" stroke="#dfe8f0" stroke-width="2" fill="none"/></svg>
  <svg style="left:55px;top:251px" width="18" height="18"><circle cx="9" cy="9" r="7.6" fill="none" stroke="#dfe8f0" stroke-width="1.3"/><path d="M4.5 9H13.5M13.5 9L10 5.5M13.5 9L10 12.5" stroke="#dfe8f0" stroke-width="2" fill="none"/></svg>
  <div class="a" style="left:0;top:675px;width:67px;height:124px;background:linear-gradient(90deg,#d2d2d2 0px,#ececec 18px,#fbfbfb 40px,#fff 60px)"></div>
  <div class="a" style="left:0;top:799px;width:67px;height:20px;background:#1479b8"></div>
  <div class="a" style="left:0;top:819px;width:67px;height:45px;background:linear-gradient(90deg,#d2d2d2 0px,#ececec 18px,#fbfbfb 40px,#fff 60px)"></div><div class="a" style="left:0;top:819px;width:67px;height:12px;background:linear-gradient(180deg,rgba(0,0,0,0.12),rgba(0,0,0,0))"></div>
  <div class="a" style="left:0;top:0;width:1px;height:864px;background:#a0a0a0"></div>
</div>

<!-- dialog -->
<div class="a" id="dlg" style="left:334px;top:275px;width:691px;height:404px;background:#fff;border-radius:8px;box-shadow:0 10px 38px rgba(0,0,0,0.42),0 0 0 1px rgba(0,0,0,0.10);overflow:hidden">
  <div class="a" style="left:0;top:0;width:691px;height:30px;background:#f3f3f3"></div>
  <svg style="left:8px;top:6px" width="16" height="16"><rect width="16.1" height="16.2" rx="2.2" fill="#0e4d60"/><path d="M13.7 11.7H4.4Q3.6 11.7 3.6 10.9V5.1Q3.6 4.4 4.4 4.4H11.8Q12.5 4.4 12.5 5.1V7.2H5.2" fill="none" stroke="#fff" stroke-width="2.1"/></svg>
  <div class="t" style="left:30px;top:8px;font-size:12px;line-height:15px;color:#1b1b1b">Setup Table Mapping</div>
  <div class="a" style="left:573px;top:14px;width:10px;height:1px;background:#b8b8b8"></div>
  <div class="a" style="left:618px;top:9px;width:10px;height:10px;border:1px solid #1b1b1b;border-radius:1px"></div>
  <svg style="left:664px;top:9px" width="11" height="11"><path d="M0.5 0.5L10.5 10.5M10.5 0.5L0.5 10.5" stroke="#1b1b1b" stroke-width="1.1"/></svg>
  <div class="t dl" style="right:587px;top:45.5px">Table Name:</div>
  <div class="t dl" style="right:587px;top:70.30000000000001px">Columns Filter:</div>
  <div class="t dl" style="right:587px;top:95.30000000000001px">Columns:</div>
  <div class="a" style="left:114px;top:43px;width:565px;height:20px;background:#f2f2f2;border:1px solid #dedede"></div>
  <div class="t" style="left:119px;top:46px;font-size:11px;line-height:14px;color:#6e6e6e">dsReq.ReqHead</div>
  <div class="a" style="left:114px;top:68px;width:565px;height:20px;background:#fff;border:1px solid #dedede"></div>
  <div class="a" id="grid" style="left:114px;top:94px;width:547px;height:205px">
    <div class="a" style="left:0;top:0;width:547px;height:18px;background:#ababab"></div>
    <div class="a" style="left:50px;top:0;width:1px;height:18px;background:#d9d9d9"></div>
    <div class="a" style="left:192px;top:0;width:1px;height:18px;background:#d9d9d9"></div>
    <div class="a" style="left:270px;top:0;width:1px;height:18px;background:#d9d9d9"></div>
    <div class="a" style="left:369px;top:0;width:1px;height:18px;background:#d9d9d9"></div>
    <div class="t gh" style="left:51px;width:141px">Name</div>
    <div class="t gh" style="left:193px;width:77px">Type</div>
    <div class="t gh" style="left:271px;width:98px">Custom</div>
    <div class="t gh" style="left:370px;width:177px">Binding</div>
  </div>
  <div class="a" style="left:114px;top:0;width:547px;height:0">
<div class="gr" style="top:112px"><div class="rh"></div><div class="c num">41</div><div class="c nm">RequestorIDCurMenuID</div><div class="c ty">string</div><div class="cb"></div><div class="c bd">field: dsReq_ReqHead_Request</div></div>
<div class="gr" style="top:129px"><div class="rh"></div><div class="c num">42</div><div class="c nm">ReqUserId</div><div class="c ty">string</div><div class="cb"></div><div class="c bd">var: UserID</div></div>
<div class="gr" style="top:146px"><div class="rh"></div><div class="c num">43</div><div class="c nm">StatusDesc</div><div class="c ty">string</div><div class="cb"></div><div class="c bd">field: dsReq_ReqHead_StatusD</div></div>
<div class="gr" style="top:163px"><div class="rh"></div><div class="c num">44</div><div class="c nm">ToDoFlag</div><div class="c ty">bool</div><div class="cb"></div><div class="c bd">field: dsReq_ReqHead_ToDoFla</div></div>
<div class="gr" style="top:180px"><div class="rh"></div><div class="c num">45</div><div class="c nm">ShipToAddressFormatted</div><div class="c ty">string</div><div class="cb"></div><div class="c bd">field: dsReq_ReqHead_ShipToA</div></div>
<div class="gr" style="top:197px"><div class="rh"></div><div class="c num">46</div><div class="c nm">BitFlag</div><div class="c ty">int</div><div class="cb"></div><div class="c bd">field: dsReq_ReqHead_BitFlag</div></div>
<div class="gr" style="top:214px"><div class="rh"></div><div class="c num">47</div><div class="c nm">CurrDispatcherName</div><div class="c ty">string</div><div class="cb"></div><div class="c bd">field: dsReq_ReqHead_CurrDis</div></div>
<div class="gr" style="top:231px"><div class="rh"></div><div class="c num">48</div><div class="c nm">ReqActionIDReqActionDe</div><div class="c ty">string</div><div class="cb"></div><div class="c bd">field: dsReq_ReqHead_ReqActi</div></div>
<div class="gr" style="top:248px"><div class="rh"></div><div class="c num">49</div><div class="c nm">RequestorIDName</div><div class="c ty">string</div><div class="cb"></div><div class="c bd">field: dsReq_ReqHead_Request</div></div>
<div class="gr" style="top:265px"><div class="rh"></div><div class="c num">50</div><div class="c nm">XbSystDisableOverridePri</div><div class="c ty">bool</div><div class="cb"></div><div class="c bd">field: dsReq_ReqHead_XbSyst</div></div>
<div class="gr" style="top:282px"><div class="rh"></div><div class="c num">51</div><div class="c nm">RowMod</div><div class="c ty">string</div><div class="cb"></div><div class="c bd">expr:<span style="color:#0000ee;text-decoration:underline">"U"</span></div></div>
  </div>
  <div class="a" style="left:663px;top:94px;width:15px;height:3px;background:#c6c6c6"></div>
  <svg style="left:665px;top:103px" width="11" height="6"><path d="M0.5 5.5L5.5 0.5L10.5 5.5Z" fill="#c0c0c0"/></svg>
  <div class="a" style="left:667px;top:268px;width:7px;height:35px;background:#cdcdcd"></div>
  <svg style="left:665px;top:347px" width="11" height="6"><path d="M0.5 0.5L5.5 5.5L10.5 0.5Z" fill="#c0c0c0"/></svg>
  <div class="a btn" style="left:7px;top:379px;width:75px;height:22px;border:1px solid #474e52;border-radius:0">OK</div>
  <div class="a btn" style="left:91px;top:379px;width:75px;height:22px">Cancel</div>
  <div class="a btn" style="left:458px;top:379px;width:110px;height:22px">Bind Automatically</div>
  <div class="a btn" style="left:575px;top:379px;width:110px;height:22px">Clear Bindings</div>
  <svg style="left:682px;top:394px" width="8" height="8"><g fill="#bdbdbd"><rect x="5" y="1" width="2" height="2"/><rect x="3" y="3" width="2" height="2"/><rect x="5" y="3" width="2" height="2"/><rect x="1" y="5" width="2" height="2"/><rect x="3" y="5" width="2" height="2"/><rect x="5" y="5" width="2" height="2"/></g></svg>
</div>
<!-- frame -->
<div class="a" style="left:0;top:0;width:1029px;height:4px;background:#a700ff;z-index:50"></div>
<div class="a" style="left:0;top:868px;width:1029px;height:4px;background:#a700ff;z-index:50"></div>
<div class="a" style="left:0;top:0;width:4px;height:872px;background:#a700ff;z-index:50"></div>
<div class="a" style="left:1025px;top:0;width:4px;height:872px;background:#a700ff;z-index:50"></div>
</body></html>
